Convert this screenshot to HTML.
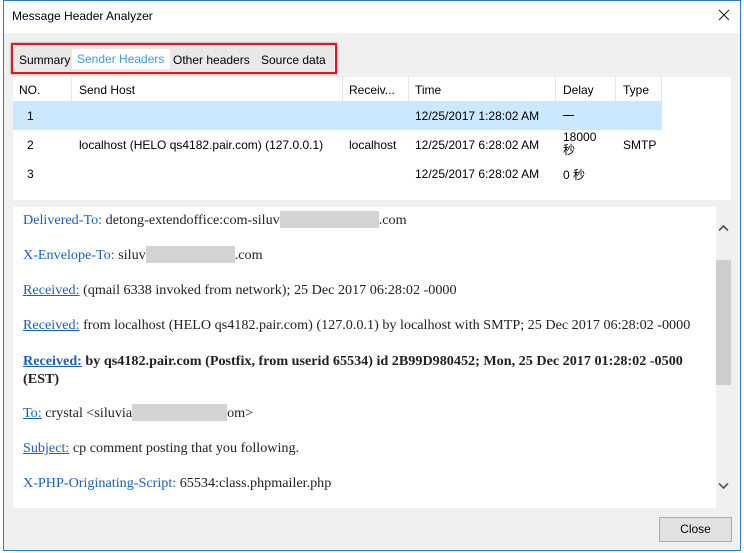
<!DOCTYPE html>
<html><head><style>
*{margin:0;padding:0;box-sizing:border-box}
body{width:744px;height:553px;background:#fff;position:relative;overflow:hidden;font-family:"Liberation Sans","Noto Sans CJK SC",sans-serif;font-size:12px;color:#000}
.a{position:absolute}
#win{left:3px;top:0;width:738px;height:551px;border:1px solid #2b79d0;background:#f0f0f0}
#title{left:4px;top:1px;width:736px;height:32px;background:#fff}
.s{font-family:"Liberation Serif",serif;font-size:14.15px;line-height:18px;color:#222;white-space:nowrap}
.b{color:#1c5fbf}
.u{color:#1c5fbf;text-decoration:underline}
.g{display:inline-block;background:#d3d3d3;height:17px;vertical-align:-4px}
.col{position:absolute;top:0;height:24px;border-right:1px solid #e5e5e5}
</style></head><body>
<div id="win" class="a"></div>
<div id="title" class="a"></div>
<div class="a" style="left:12px;top:9px;font-size:12px">Message Header Analyzer</div>
<svg class="a" style="left:718px;top:9px" width="12" height="12" viewBox="0 0 12 12"><path d="M1 1L11 11M11 1L1 11" stroke="#222" stroke-width="1.1" fill="none"/></svg>

<div class="a" style="left:11px;top:43px;width:326px;height:31px;border:2px solid #e3161b;box-shadow:0 0 2px #888"></div>
<div class="a" style="left:14px;top:46px;width:320px;height:25px;background:#e8e8e8"></div>
<div class="a" style="left:72px;top:49px;width:98px;height:20px;background:#fff"></div>
<div class="a" style="left:19px;top:53px">Summary</div>
<div class="a" style="left:77px;top:52px;color:#3d9be9">Sender Headers</div>
<div class="a" style="left:173px;top:53px">Other headers</div>
<div class="a" style="left:261px;top:53px">Source data</div>

<div class="a" style="left:13px;top:77px;width:718px;height:123px;background:#fff"></div>
<div class="a" style="left:13px;top:77px;width:649px;height:24px">
<div class="col" style="left:0;width:59px"></div><div class="col" style="left:59px;width:271px"></div><div class="col" style="left:330px;width:66px"></div><div class="col" style="left:396px;width:147px"></div><div class="col" style="left:543px;width:60px"></div><div class="col" style="left:603px;width:46px"></div>
</div>
<div class="a" style="left:19px;top:83px">NO.</div>
<div class="a" style="left:79px;top:83px">Send Host</div>
<div class="a" style="left:349px;top:83px">Receiv...</div>
<div class="a" style="left:415px;top:83px">Time</div>
<div class="a" style="left:563px;top:83px">Delay</div>
<div class="a" style="left:623px;top:83px">Type</div>
<div class="a" style="left:13px;top:101px;width:649px;height:29px;background:#cce8ff"></div>
<div class="a" style="left:27px;top:109px">1</div>
<div class="a" style="left:415px;top:109px">12/25/2017 1:28:02 AM</div>
<div class="a" style="left:563px;top:115px;width:11px;height:1px;background:#000"></div>
<div class="a" style="left:27px;top:138px">2</div>
<div class="a" style="left:79px;top:138px">localhost (HELO qs4182.pair.com) (127.0.0.1)</div>
<div class="a" style="left:349px;top:138px">localhost</div>
<div class="a" style="left:415px;top:138px">12/25/2017 6:28:02 AM</div>
<div class="a" style="left:563px;top:131px;line-height:13px">18000<br>秒</div>
<div class="a" style="left:623px;top:138px">SMTP</div>
<div class="a" style="left:27px;top:167px">3</div>
<div class="a" style="left:415px;top:167px">12/25/2017 6:28:02 AM</div>
<div class="a" style="left:563px;top:166px">0 秒</div>

<div class="a" style="left:13px;top:207px;width:718px;height:301px;background:#fff"></div>
<div class="a" style="left:716px;top:207px;width:15px;height:301px;background:#f0f0f0"></div>
<div class="a" style="left:716px;top:260px;width:15px;height:125px;background:#cdcdcd"></div>
<svg class="a" style="left:718px;top:224px" width="11" height="8" viewBox="0 0 11 8"><path d="M1 6.5L5.5 2L10 6.5" stroke="#555" stroke-width="1.6" fill="none"/></svg>
<svg class="a" style="left:718px;top:482px" width="11" height="8" viewBox="0 0 11 8"><path d="M1 1.5L5.5 6L10 1.5" stroke="#555" stroke-width="1.6" fill="none"/></svg>

<div class="a s" style="left:23px;top:211px"><span class="b">Delivered-To:</span> detong-extendoffice:com-siluv<span class="g" style="width:99px"></span>.com</div>
<div class="a s" style="left:23px;top:246px"><span class="b">X-Envelope-To:</span> siluv<span class="g" style="width:89px"></span>.com</div>
<div class="a s" style="left:23px;top:281px"><span class="u">Received:</span> (qmail 6338 invoked from network); 25 Dec 2017 06:28:02 -0000</div>
<div class="a s" style="left:23px;top:316px"><span class="u">Received:</span> from localhost (HELO qs4182.pair.com) (127.0.0.1) by localhost with SMTP; 25 Dec 2017 06:28:02 -0000</div>
<div class="a s" style="left:23px;top:352px;font-weight:bold;width:690px;white-space:normal"><span class="u">Received:</span> by qs4182.pair.com (Postfix, from userid 65534) id 2B99D980452; Mon, 25 Dec 2017 01:28:02 -0500 (EST)</div>
<div class="a s" style="left:23px;top:404px"><span class="u">To:</span> crystal &lt;siluvia<span class="g" style="width:95px"></span>om&gt;</div>
<div class="a s" style="left:23px;top:439px"><span class="u">Subject:</span> cp comment posting that you following.</div>
<div class="a s" style="left:23px;top:474px"><span class="b">X-PHP-Originating-Script:</span> 65534:class.phpmailer.php</div>

<div class="a" style="left:659px;top:517px;width:73px;height:25px;background:#e1e1e1;border:1px solid #adadad;text-align:center;line-height:23px">Close</div>
</body></html>
